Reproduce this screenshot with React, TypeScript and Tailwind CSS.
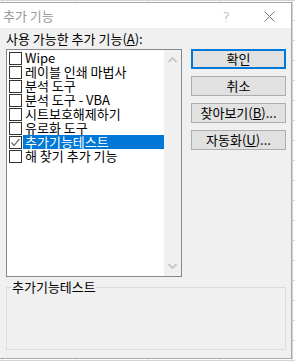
import React from 'react';

const items = [
  { label: 'Wipe', checked: false },
  { label: '레이블 인쇄 마법사', checked: false },
  { label: '분석 도구', checked: false },
  { label: '분석 도구 - VBA', checked: false },
  { label: '시트보호해제하기', checked: false },
  { label: '유로화 도구', checked: false },
  { label: '추가기능테스트', checked: true, selected: true },
  { label: '해 찾기 추가 기능', checked: false },
];

const font = "font-['Noto_Sans_CJK_KR','Noto_Sans',sans-serif]";

const Button: React.FC<{ children: React.ReactNode; primary?: boolean }> = ({ children, primary }) => (
  <div
    className={`h-[20px] w-[95px] flex items-center justify-center bg-[#e1e1e1] text-[13px] leading-[14px] text-black ${
      primary ? 'border-2 border-[#0078d7]' : 'border border-[#adadad]'
    }`}
  >
    {children}
  </div>
);

const App: React.FC = () => {
  return (
    <div
      className={`w-[295px] h-[361px] overflow-hidden bg-white bg-[linear-gradient(to_right,#d4d4d4_1px,transparent_1px),linear-gradient(to_bottom,#d4d4d4_1px,transparent_1px)] bg-[size:72.5px_20px] bg-[position:2px_0px] ${font}`}
    >
      <div className="mt-[2px] w-[292px] h-[357px] flex flex-col border-t border-r border-b border-[#a9a9a9] bg-[#f0f0f0]">
        {/* title bar */}
        <div className="h-[25px] bg-white flex items-center">
          <span className="ml-[3px] text-[13px] leading-[14px] text-[#999999]">추가 기능</span>
          <span className="ml-auto mr-[34px] mt-[3px] text-[14px] leading-[15px] text-[#9a9a9a] font-['DejaVu_Sans',sans-serif] font-light">?</span>
          <svg width="11" height="11" viewBox="0 0 11 11" className="mr-[16px] mt-[2px]">
            <path d="M0.5 0.5 L10.5 10.5 M10.5 0.5 L0.5 10.5" stroke="#777777" strokeWidth="1" fill="none" />
          </svg>
        </div>

        <div className="flex-1 flex flex-col">
          <div className="mt-[4px] ml-[6px] text-[13px] leading-[14px] text-black">
            사용 가능한 추가 기능(<span className="underline">A</span>):
          </div>

          <div className="mt-[3px] flex">
            {/* list box */}
            <div className="ml-[6px] w-[176px] h-[228px] border border-[#828790] bg-white flex">
              <div className="flex-1 pt-[1px]">
                {items.map((it) => (
                  <div key={it.label} className="h-[14px] flex items-center">
                    <div className="ml-[2px] w-[13px] h-[13px] border border-[#333333] bg-white flex items-center justify-center">
                      {it.checked && (
                        <svg width="11" height="11" viewBox="0 0 11 11">
                          <path d="M1.5 5.5 L4 8.5 L9.5 2" stroke="#707070" strokeWidth="1.2" fill="none" />
                        </svg>
                      )}
                    </div>
                    <div
                      className={`ml-px flex-1 h-[14px] pl-[2px] text-[13px] leading-[14px] whitespace-nowrap ${
                        it.selected ? 'bg-[#0078d7] text-white' : 'text-black'
                      }`}
                    >
                      {it.label}
                    </div>
                  </div>
                ))}
              </div>
              {/* scrollbar */}
              <div className="w-[17px] bg-[#f0f0f0] flex flex-col items-center justify-between py-[7px]">
                <svg width="9" height="6" viewBox="0 0 9 6">
                  <path d="M0.5 5 L4.5 1 L8.5 5" stroke="#c2c2c2" strokeWidth="1.6" fill="none" />
                </svg>
                <svg width="9" height="6" viewBox="0 0 9 6">
                  <path d="M0.5 1 L4.5 5 L8.5 1" stroke="#c2c2c2" strokeWidth="1.6" fill="none" />
                </svg>
              </div>
            </div>

            {/* buttons */}
            <div className="ml-[9px] flex flex-col gap-[7px]">
              <Button primary>확인</Button>
              <Button>취소</Button>
              <Button>
                찾아보기(<span className="underline">B</span>)...
              </Button>
              <Button>
                자동화(<span className="underline">U</span>)...
              </Button>
            </div>
          </div>

          {/* description group */}
          <fieldset className="mt-[3px] ml-[6px] w-[280px] h-[70px] border border-[#dcdcdc]">
            <legend className="ml-[5px] text-[13px] leading-[14px] text-black">추가기능테스트</legend>
          </fieldset>
        </div>
      </div>
    </div>
  );
};

export default App;
